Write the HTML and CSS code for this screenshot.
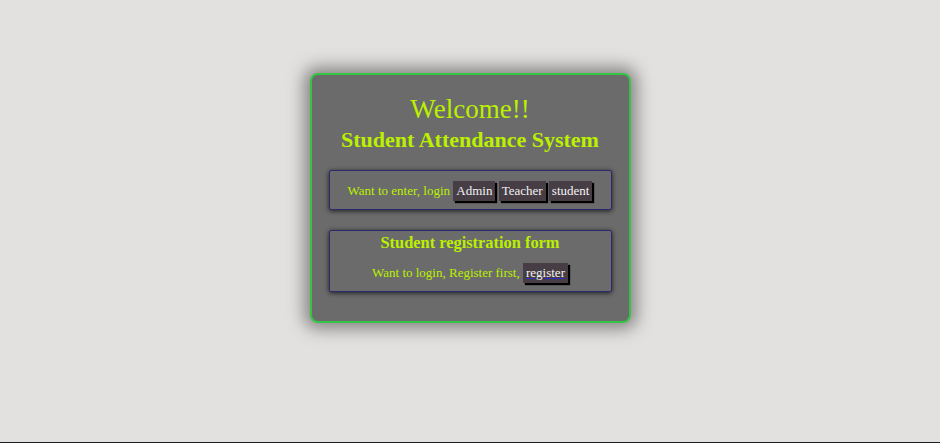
FILE: index.html
```html
<!DOCTYPE html>
<html lang="en">
<head>
<meta charset="utf-8">
<title>Student Attendance System</title>
<link rel="stylesheet" href="styles.css">
</head>
<body>
  <main class="card">
    <h1 class="welcome">Welcome!!</h1>
    <h2 class="title">Student Attendance System</h2>
    <section class="panel login">
      <p class="line">Want to enter, login <a class="btn" href="#">Admin</a> <a class="btn" href="#">Teacher</a> <a class="btn" href="#">student</a></p>
    </section>
    <section class="panel register">
      <h3 class="panel-title">Student registration form</h3>
      <p class="line">Want to login, Register first, <a class="btn btn-link" href="#">register</a></p>
    </section>
  </main>
</body>
</html>
```
FILE: styles.css
```css
html, body {
  margin: 0;
  padding: 0;
}
body {
  background: #e2e1df;
  font-family: "Liberation Serif", "Times New Roman", serif;
  height: 442px;
  border-bottom: 1px solid #1e1e1e;
  overflow: hidden;
}
.card {
  width: 283px;
  margin: 73px auto 0;
  padding: 19px 17px 29px;
  background: #6b6b6b;
  border: 2px solid #36c444;
  border-radius: 8px;
  box-shadow: 0 0 16px 6px rgba(60, 60, 60, 0.55);
  text-align: center;
  color: #bbf000;
}
.welcome {
  margin: 0;
  font-size: 27px;
  font-weight: normal;
  line-height: 31px;
}
.title {
  margin: 2px 0 0;
  font-size: 22px;
  font-weight: bold;
  line-height: 26px;
}
.panel {
  border: 1px solid #2c2a6e;
  border-radius: 2px;
  box-shadow: 0 1px 5px rgba(0, 0, 0, 0.75);
  background: #6b6b6b;
}
.login {
  margin-top: 17px;
  padding: 10px 0 8px;
}
.register {
  margin-top: 20px;
  padding: 2px 0 8px;
}
.panel-title {
  margin: 0;
  font-size: 16.4px;
  font-weight: bold;
  line-height: 20px;
}
.line {
  margin: 0;
  font-size: 13px;
  line-height: 20px;
}
.register .line {
  margin-top: 10px;
}
.btn {
  display: inline-block;
  padding: 2px 3px;
  line-height: 16px;
  background: #463e44;
  color: #f4f2f4;
  text-decoration: none;
  box-shadow: 2px 2px 1px #000;
}
.btn-link {
  text-decoration: underline;
  text-decoration-color: #2d2dc8;
}
```
